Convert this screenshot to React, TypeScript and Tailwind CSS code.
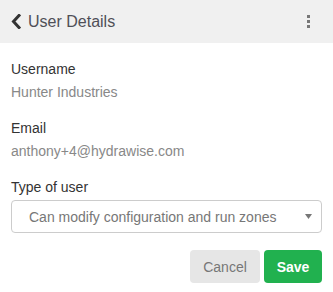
import React from 'react';

const App: React.FC = () => {
  return (
    <div className="w-[333px] h-[292px] bg-white font-['Liberation_Sans',Arial,sans-serif]">
      <div className="h-[43px] bg-[#f0f0f0] flex items-center justify-between pl-[11px] pr-[23px]">
        <div className="flex items-center">
          <svg width="10" height="15" viewBox="0 0 10 15" className="mr-[7px]">
            <path d="M8 1.5 L2.5 7.5 L8 13.5" fill="none" stroke="#333" strokeWidth="3" strokeLinecap="square" />
          </svg>
          <span className="text-[16px] text-[#4f4f57]">User Details</span>
        </div>
        <div className="flex flex-col gap-[2px]">
          <span className="block w-[3px] h-[3px] bg-[#777]" />
          <span className="block w-[3px] h-[3px] bg-[#777]" />
          <span className="block w-[3px] h-[3px] bg-[#777]" />
        </div>
      </div>

      <div className="px-[11px] text-[14px] leading-[20px]">
        <div className="mt-[16px] text-[#333]">Username</div>
        <div className="mt-[3px] text-[#888]">Hunter Industries</div>

        <div className="mt-[16px] text-[#333]">Email</div>
        <div className="mt-[3px] text-[#888]">anthony+4@hydrawise.com</div>

        <div className="mt-[16px] text-[#333]">Type of user</div>
        <div className="mt-[3px] h-[33px] border border-[#ccc] rounded-[4px] flex items-center justify-between pl-[17px] pr-[9px]">
          <span className="text-[#777]">Can modify configuration and run zones</span>
          <svg width="7" height="5" viewBox="0 0 7 5">
            <path d="M0 0 L7 0 L3.5 5 Z" fill="#777" />
          </svg>
        </div>

        <div className="mt-[17px] flex justify-end gap-[4px]">
          <button className="h-[33px] w-[70px] rounded-[4px] bg-[#e6e6e6] text-[#777]">Cancel</button>
          <button className="h-[33px] w-[58px] rounded-[4px] bg-[#21b14f] text-white font-bold">Save</button>
        </div>
      </div>
    </div>
  );
};

export default App;
